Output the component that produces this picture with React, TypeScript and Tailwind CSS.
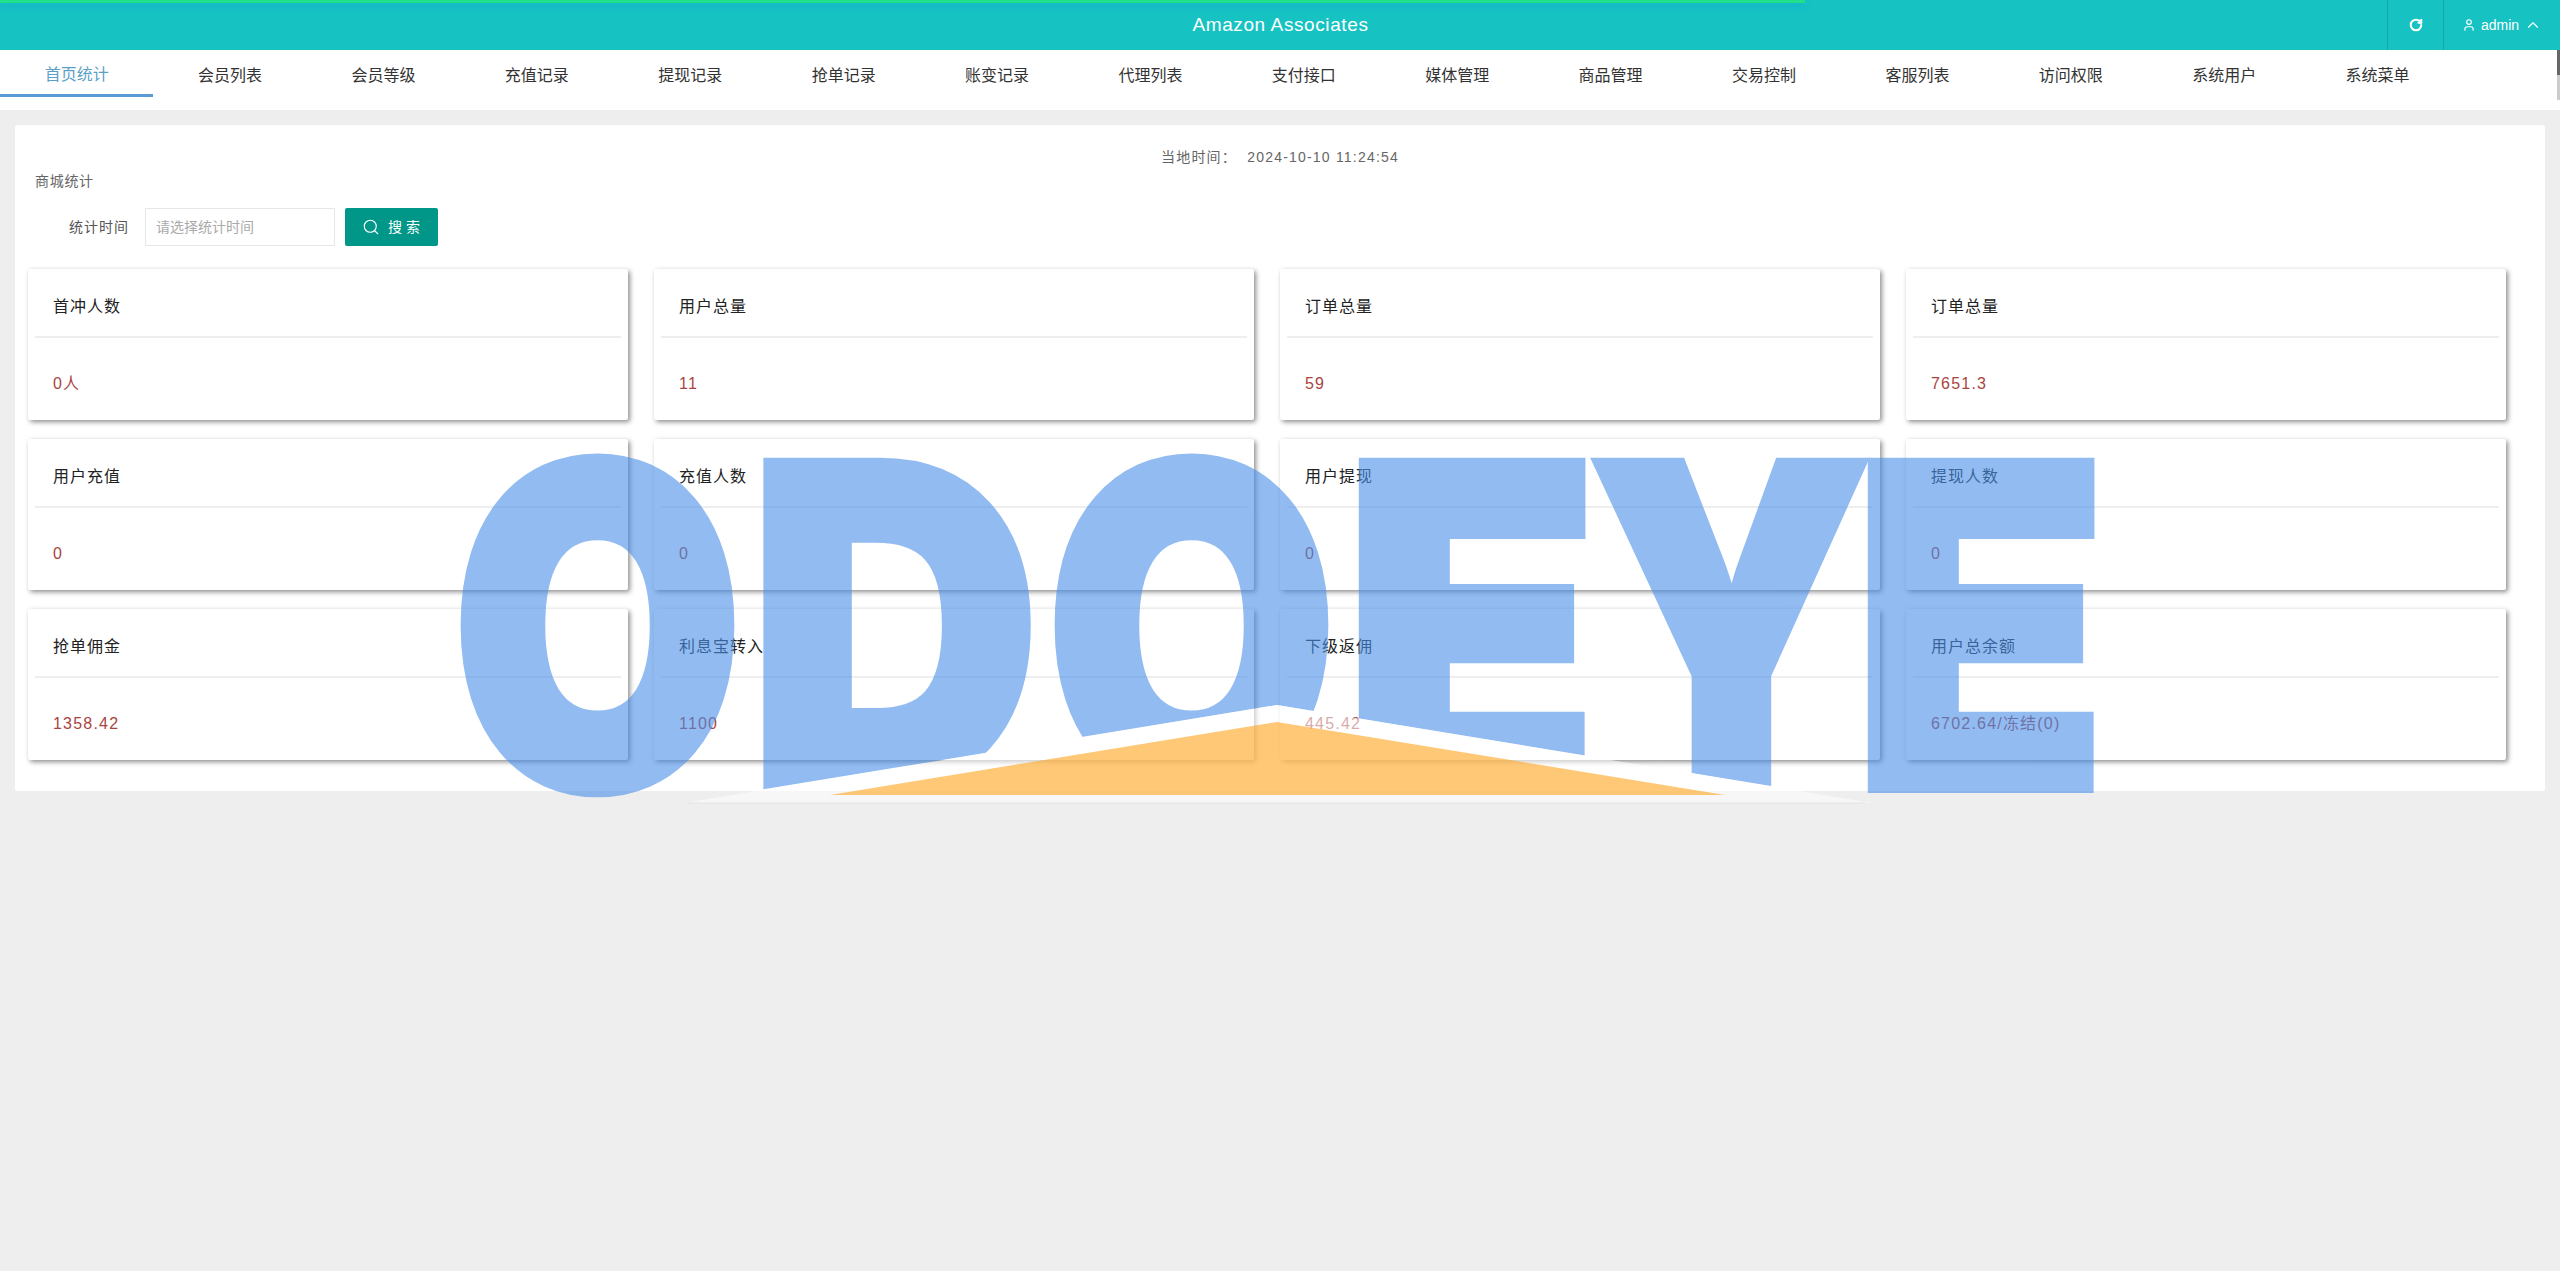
import { RotateCw, Search, User, ChevronUp } from "lucide-react";

const tabs = ["首页统计","会员列表","会员等级","充值记录","提现记录","抢单记录","账变记录","代理列表","支付接口","媒体管理","商品管理","交易控制","客服列表","访问权限","系统用户","系统菜单"];

const stats = [
  ["首冲人数","0人"],["用户总量","11"],["订单总量","59"],["订单总量","7651.3"],
  ["用户充值","0"],["充值人数","0"],["用户提现","0"],["提现人数","0"],
  ["抢单佣金","1358.42"],["利息宝转入","1100"],["下级返佣","445.42"],["用户总余额","6702.64/冻结(0)"],
];

// Brand mark laid over the dashboard: heavy letters notched by a roof shape.
function BrandMark() {
  const letters = [
    { ch: "O", x: 452, w: 291 },
    { ch: "D", x: 749, w: 291 },
    { ch: "O", x: 1046, w: 291 },
    { ch: "E", x: 1344, w: 254 },
    { ch: "Y", x: 1589, w: 282 },
    { ch: "E", x: 1853, w: 254 },
  ];
  return (
    <svg className="absolute left-0 top-0 pointer-events-none" width="2560" height="1271" viewBox="0 0 2560 1271">
      <defs>
        <clipPath id="roof-notch">
          <path clipRule="evenodd" d="M0 0H2560V1271H0Z M1277 705 L1875 803 V830 H680 V803 Z" />
        </clipPath>
      </defs>
      <g opacity="0.6" fill="#4a90e8" stroke="#4a90e8" strokeWidth="10" strokeLinejoin="miter" clipPath="url(#roof-notch)">
        {letters.map((l, i) => (
          <text key={i} x={l.x} y={788} textLength={l.w} lengthAdjust="spacingAndGlyphs" fontSize="447" fontWeight="900" fontFamily="Inter, sans-serif">
            {l.ch}
          </text>
        ))}
      </g>
      <polygon points="1277,705 1872,803 684,803" fill="#ffffff" opacity="0.55" />
      <line x1="688" y1="803" x2="1865" y2="803" stroke="#e2e2e2" strokeWidth="1" />
      <polygon points="1277,722 1725,795 830,795" fill="#fda41a" opacity="0.6" />
    </svg>
  );
}

export default function App() {
  return (
    <div className="relative min-h-screen bg-[#eeeeee] overflow-hidden font-['Liberation_Sans','Noto_Sans_CJK_SC',sans-serif]">
      <div className="relative flex h-[50px] items-center bg-[#16c2c2] text-white">
        <div className="absolute left-0 top-0 h-[3px] w-[1805px] bg-[#22e08a] shadow-[0_4px_6px_rgba(30,160,220,0.45)]" />
        <div className="flex-1 pl-[174px] text-center text-[19px] tracking-[0.6px]">Amazon Associates</div>
        <div className="flex h-full w-[56px] items-center justify-center border-l border-[#12a8a8]">
          <RotateCw size={14} strokeWidth={3.5} />
        </div>
        <div className="flex h-full w-[117px] items-center justify-center gap-[5px] border-l border-[#12a8a8] text-[14px]">
          <User size={14} />
          <span>admin</span>
          <ChevronUp size={18} strokeWidth={1.5} />
        </div>
      </div>

      <div className="relative flex h-[60px] bg-white">
        {tabs.map((t, i) => (
          <div
            key={t}
            className={
              i === 0
                ? "flex h-[47px] w-[153.4px] items-center justify-center border-b-[3px] border-[#5b9bd5] pt-[5px] text-[16px] text-[#5a9fc8]"
                : "flex h-[47px] w-[153.4px] items-center justify-center pt-[5px] text-[16px] text-[#333333]"
            }
          >
            {t}
          </div>
        ))}
        <div className="absolute right-0 top-0 h-[50px] w-[3px] bg-[#cccccc]">
          <div className="h-[25px] bg-[#666666]" />
        </div>
      </div>

      <main className="mx-[15px] mt-[15px] h-[666px] rounded-[2px] bg-white pl-[13px] pr-[13px]">
        <div className="pt-[22px] text-center text-[14px] leading-[20px] tracking-[1.2px] text-[#666666]">
          当地时间：&nbsp;&nbsp;2024-10-10 11:24:54
        </div>
        <div className="mt-[4px] pl-[7px] text-[14px] leading-[20px] tracking-[0.7px] text-[#666666]">商城统计</div>
        <div className="mt-[17px] flex h-[38px] items-center">
          <label className="w-[117px] pr-[16px] text-right text-[14px] tracking-[1px] whitespace-nowrap text-[#555555]">统计时间</label>
          <div className="flex h-[38px] w-[190px] items-center border border-[#e6e6e6] pl-[10px] text-[14px] text-[#aaaaaa]">请选择统计时间</div>
          <button className="ml-[10px] flex h-[38px] w-[93px] items-center justify-center gap-[8px] rounded-[2px] bg-[#009688] pl-[3px] text-[14px] tracking-[4px] text-white">
            <Search size={18} strokeWidth={1.5} />
            <span>搜索</span>
          </button>
        </div>
        <div className="mt-[23px] grid grid-cols-[repeat(4,600px)] gap-x-[26px] gap-y-[19px]">
          {stats.map(([title, value], i) => (
            <div key={i} className="h-[151px] rounded-[2px] bg-white shadow-[2px_2px_5px_rgba(0,0,0,0.45)]">
              <div className="mx-[7px] flex h-[69px] items-center border-b-2 border-[#eeeeee] pl-[18px] pt-[9px] text-[16px] tracking-[1px] text-[#222222]">{title}</div>
              <div className="flex h-[82px] items-center pl-[25px] pt-[10px] text-[16px] tracking-[1.2px] text-[#a94442]">{value}</div>
            </div>
          ))}
        </div>
      </main>

      <BrandMark />
    </div>
  );
}
